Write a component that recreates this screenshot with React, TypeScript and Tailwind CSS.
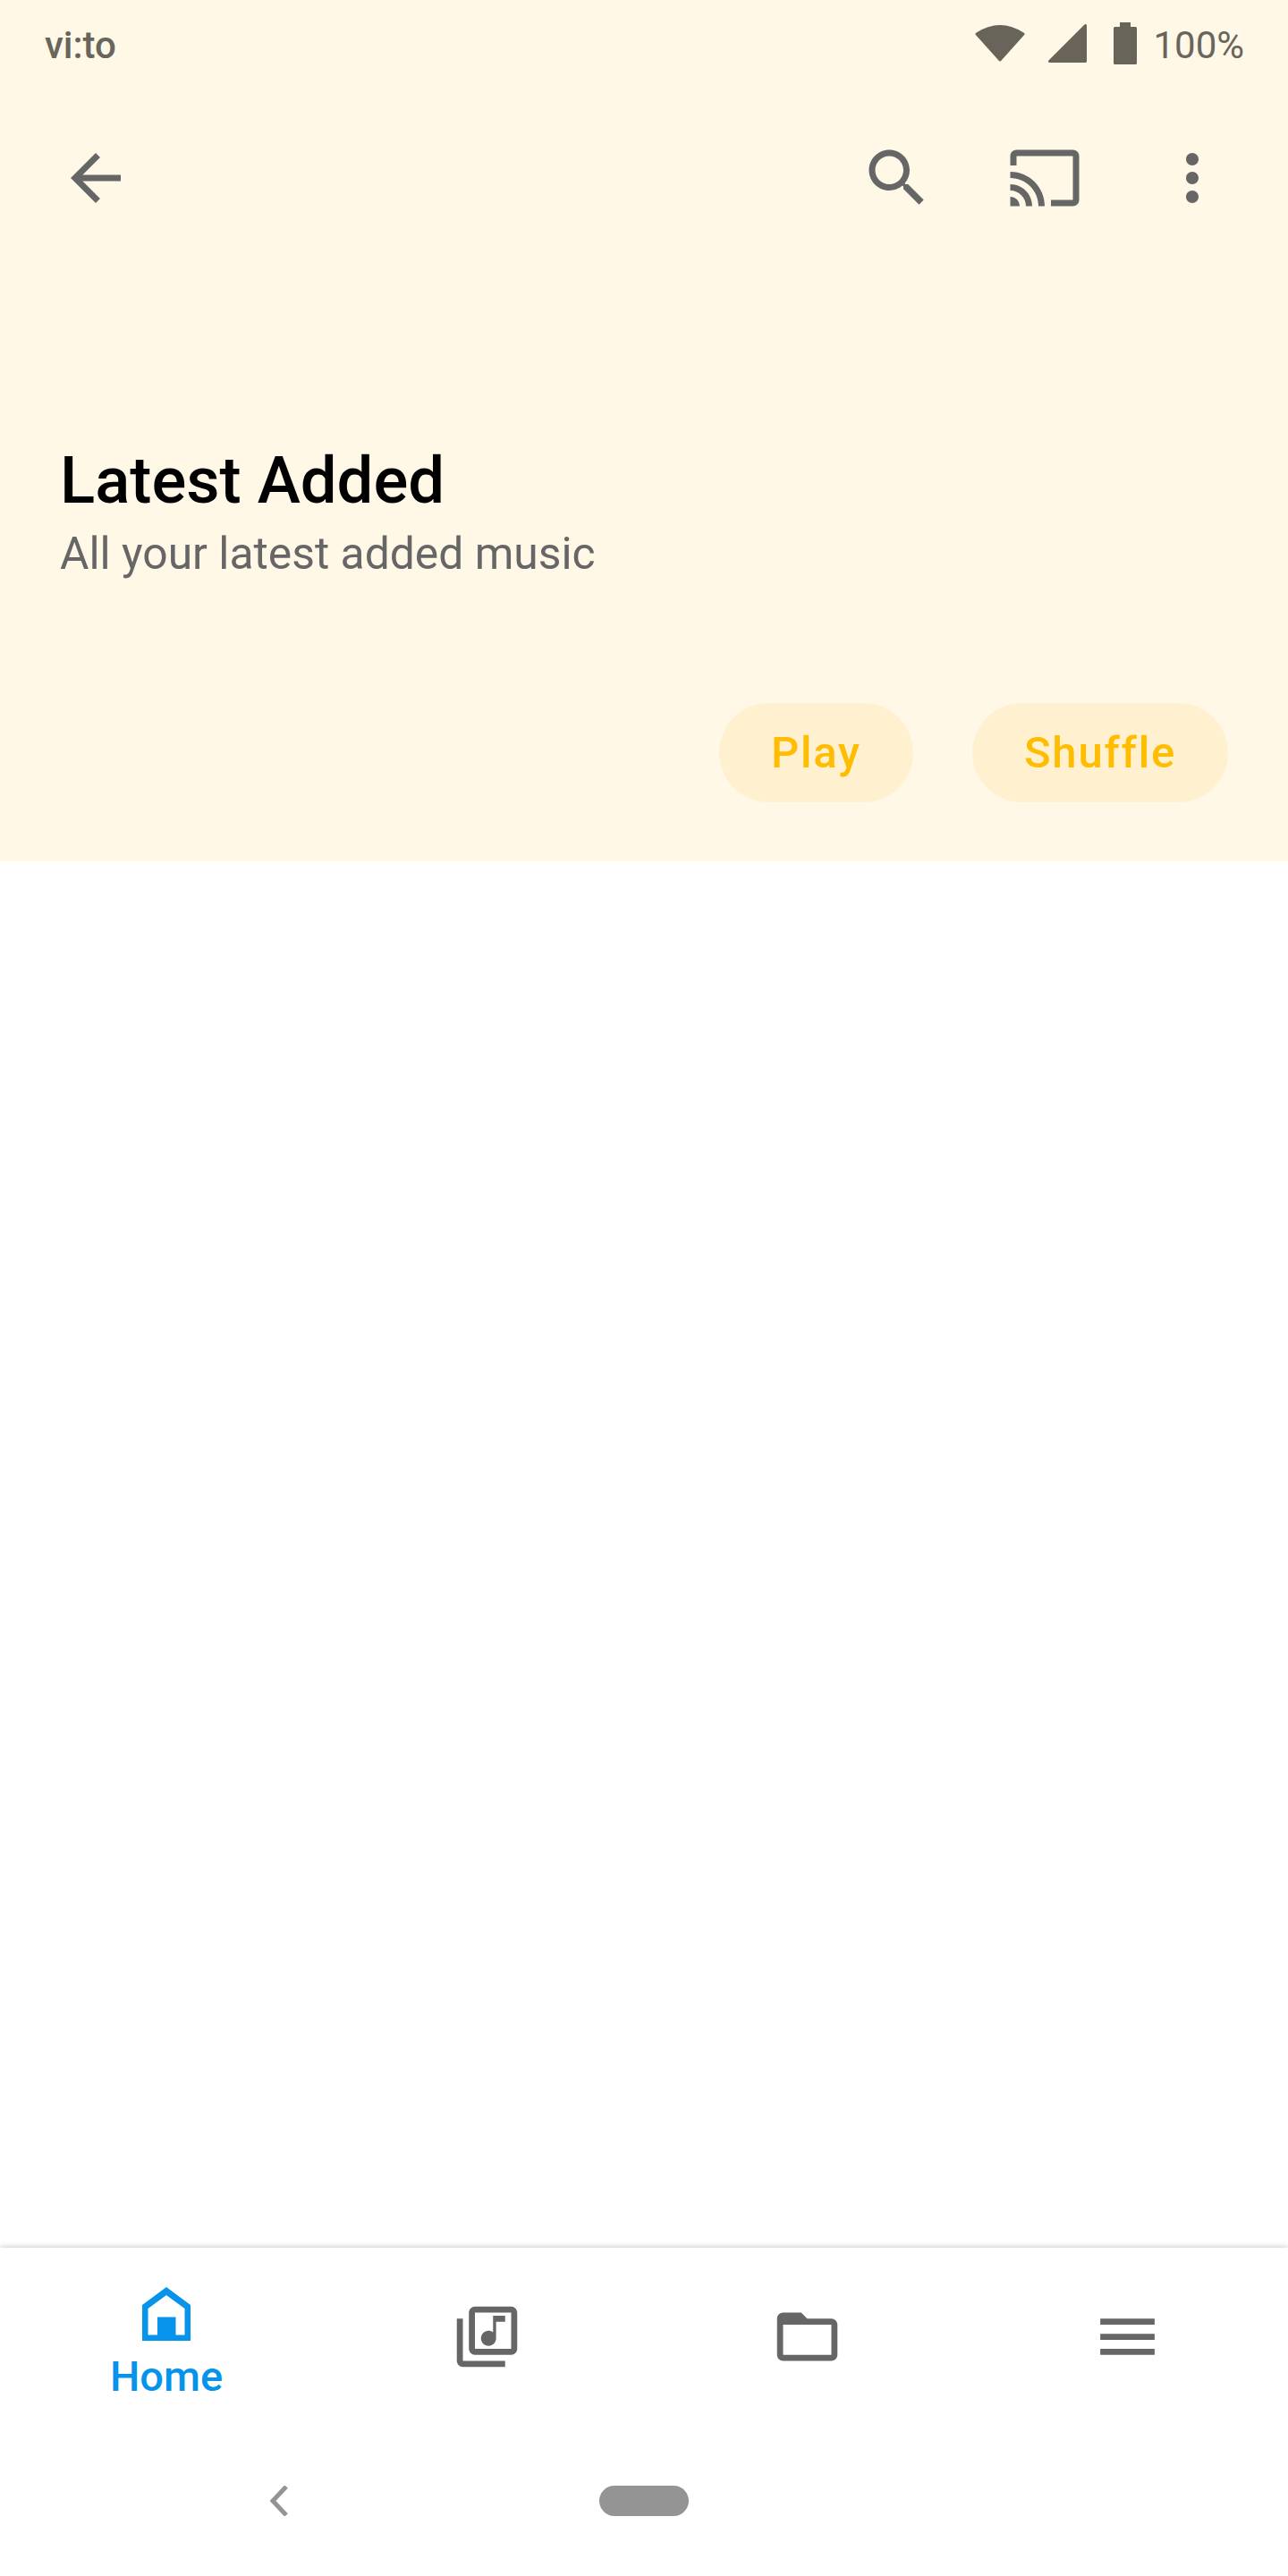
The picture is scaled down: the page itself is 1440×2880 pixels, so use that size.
const GREY = "#666666"

function MaterialIcon({ d, size, color = GREY }: { d: string; size: number; color?: string }) {
    return (
        <svg viewBox="0 0 24 24" width={size} height={size} fill={color} className="shrink-0">
            <path d={d} />
        </svg>
    )
}

function StatusBar() {
    return (
        <div className="flex h-[84px] items-start justify-between pl-[50px] pr-[49px] text-[42px] leading-[50px] text-[#69655c]">
            <span className="mt-[26px] font-medium">vi:to</span>
            <div className="flex items-start">
                <svg viewBox="0 0 56 42" width={56} height={42} fill="#68645a" className="mt-[27px]">
                    <path
                        d="M2 11 Q28 -6 54 11 L28 40 Z"
                        stroke="#68645a"
                        strokeWidth="3"
                        strokeLinejoin="round"
                    />
                </svg>
                <svg viewBox="0 0 43 43" width={43} height={43} fill="#68645a" className="ml-[26px] mt-[27px]">
                    <path d="M41.5 1.5 V41.5 H1.5 Z" stroke="#68645a" strokeWidth="3" strokeLinejoin="round" />
                </svg>
                <svg viewBox="0 0 26 47" width={26} height={47} fill="#68645a" className="ml-[30px] mt-[25px]">
                    <path d="M7 0 H19 V5 H24.5 Q26 5 26 6.5 V45.5 Q26 47 24.5 47 H1.5 Q0 47 0 45.5 V6.5 Q0 5 1.5 5 H7 Z" />
                </svg>
                <span className="ml-[18px] mt-[26px]">100%</span>
            </div>
        </div>
    )
}

function Toolbar() {
    return (
        <div className="mt-[73px] flex items-center justify-between pl-[65px] pr-[65px]">
            <MaterialIcon size={84} d="M20 11H7.83l5.59-5.59L12 4l-8 8 8 8 1.41-1.41L7.83 13H20v-2z" />
            <div className="flex items-center gap-[81px]">
                <MaterialIcon
                    size={84}
                    d="M15.5 14h-.79l-.28-.27C15.41 12.59 16 11.11 16 9.5 16 5.91 13.09 3 9.5 3S3 5.91 3 9.5 5.91 16 9.5 16c1.61 0 3.09-.59 4.23-1.57l.27.28v.79l5 4.99L20.49 19l-4.99-5zm-6 0C7.01 14 5 11.99 5 9.5S7.01 5 9.5 5 14 7.01 14 9.5 11.99 14 9.5 14z"
                />
                <MaterialIcon
                    size={84}
                    d="M21 3H3c-1.1 0-2 .9-2 2v3h2V5h18v14h-7v2h7c1.1 0 2-.9 2-2V5c0-1.1-.9-2-2-2zM1 18v3h3c0-1.66-1.34-3-3-3zm0-4v2c2.76 0 5 2.24 5 5h2c0-3.87-3.13-7-7-7zm0-4v2c4.97 0 9 4.03 9 9h2c0-6.08-4.93-11-11-11z"
                />
                <MaterialIcon
                    size={84}
                    d="M12 8c1.1 0 2-.9 2-2s-.9-2-2-2-2 .9-2 2 .9 2 2 2zm0 2c-1.1 0-2 .9-2 2s.9 2 2 2 2-.9 2-2-.9-2-2-2zm0 6c-1.1 0-2 .9-2 2s.9 2 2 2 2-.9 2-2-.9-2-2-2z"
                />
            </div>
        </div>
    )
}

function PillButton({ label }: { label: string }) {
    return (
        <button className="flex h-[111px] items-center rounded-full bg-[#fff1d0] px-[58px] text-[49px] font-medium tracking-[1.8px] text-[#ffbc00]">
            {label}
        </button>
    )
}

function Header() {
    return (
        <div className="h-[963px] shrink-0 bg-[#fff8e6]">
            <StatusBar />
            <Toolbar />
            <div className="mt-[256px] pl-[67px]">
                <h1 className="text-[72.5px] leading-[82px] font-medium text-black">Latest Added</h1>
                <p className="mt-[11px] text-[49.8px] leading-[58px] text-[#666666]">All your latest added music</p>
            </div>
            <div className="mt-[138px] flex justify-end gap-[66px] pr-[67px]">
                <PillButton label="Play" />
                <PillButton label="Shuffle" />
            </div>
        </div>
    )
}

function BottomNav() {
    return (
        <div className="shrink-0 bg-white shadow-[0_-2px_6px_rgba(0,0,0,0.16)]">
            <div className="grid h-[200px] grid-cols-4 pl-[7px] pr-[1px]">
                <div className="flex flex-col items-center pt-[44px]">
                    <svg viewBox="0 0 54 60" width={54} height={60} fill="#0693eb">
                        <path
                            fillRule="evenodd"
                            d="M27 0 L54 20 V60 H0 V20 Z M27 9 L6.5 24 V53.5 H17 V33.5 H37.5 V53.5 H47.5 V24 Z"
                        />
                    </svg>
                    <span className="mt-[13px] text-[47px] leading-[54px] font-medium text-[#0693eb]">Home</span>
                </div>
                <div className="flex justify-center pt-[59px]">
                    <MaterialIcon
                        size={81}
                        d="M20 2H8c-1.1 0-2 .9-2 2v12c0 1.1.9 2 2 2h12c1.1 0 2-.9 2-2V4c0-1.1-.9-2-2-2zm0 14H8V4h12v12zm-7.5-1c1.38 0 2.5-1.12 2.5-2.5V7h3V5h-4v5.51c-.42-.32-.93-.51-1.5-.51-1.38 0-2.5 1.12-2.5 2.5s1.12 2.5 2.5 2.5zM4 6H2v14c0 1.1.9 2 2 2h14v-2H4V6z"
                    />
                </div>
                <div className="flex justify-center pt-[59px]">
                    <MaterialIcon
                        size={81}
                        d="M20 6h-8l-2-2H4c-1.1 0-1.99.9-1.99 2L2 18c0 1.1.9 2 2 2h16c1.1 0 2-.9 2-2V8c0-1.1-.9-2-2-2zm0 12H4V8h16v10z"
                    />
                </div>
                <div className="flex justify-center pt-[59px]">
                    <MaterialIcon size={81} d="M3 18h18v-2H3v2zm0-5h18v-2H3v2zm0-7v2h18V6H3z" />
                </div>
            </div>
            <div className="flex h-[167px] items-start pl-[302px] pt-[66px]">
                <svg viewBox="0 0 20 34" width={20} height={34} fill="none" stroke="#949494" strokeWidth="5">
                    <path d="M18 1 L3 17 L18 33" />
                </svg>
                <div className="ml-[348px] h-[34px] w-[100px] rounded-full bg-[#949494]" />
            </div>
        </div>
    )
}

export default function App() {
    return (
        <div className="flex h-[2880px] flex-col bg-white font-['Roboto',sans-serif]">
            <Header />
            <div className="flex-1" />
            <BottomNav />
        </div>
    )
}
